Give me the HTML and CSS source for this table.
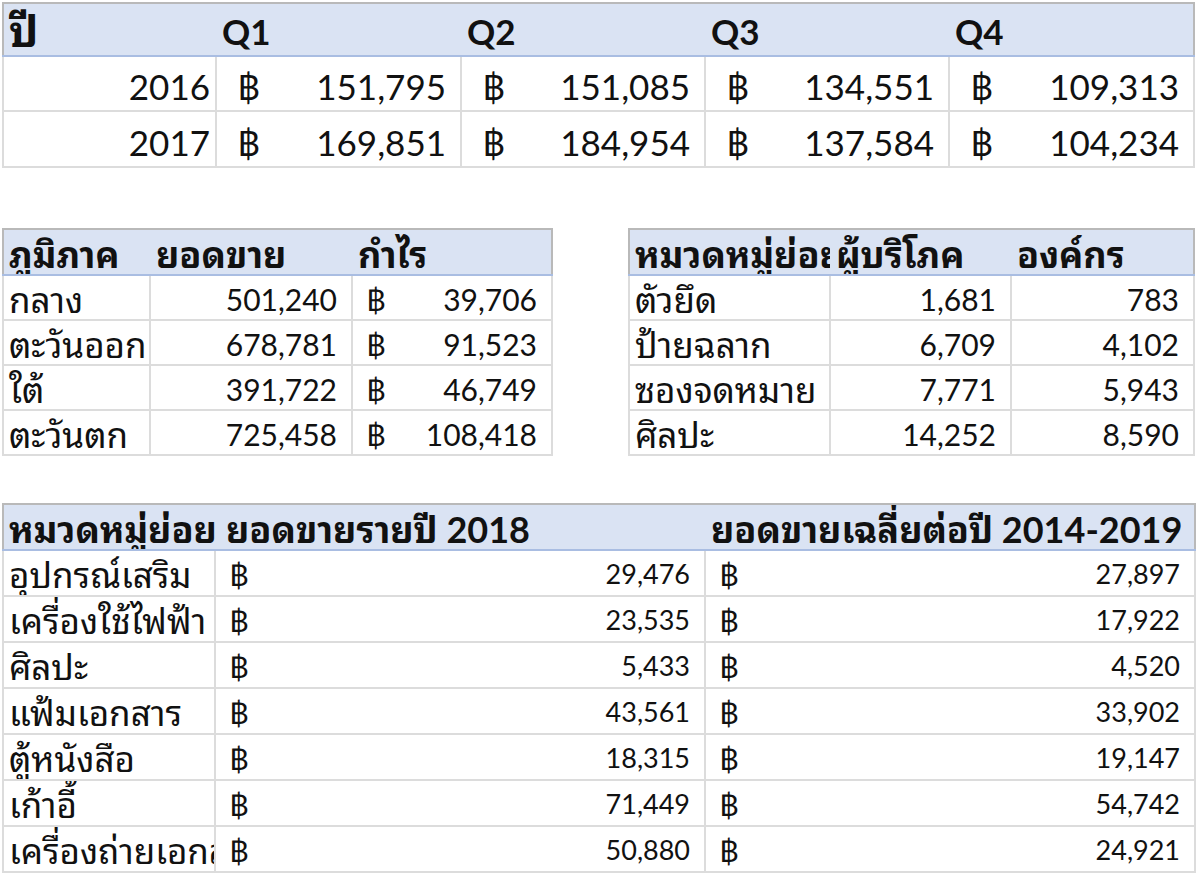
FILE: index.html
```html
<!DOCTYPE html>
<html lang="th">
<head>
<meta charset="utf-8">
<link rel="stylesheet" href="styles.css">
</head>
<body>
<div class="page">
  <table class="sheet t1">
    <colgroup><col style="width:213px"><col style="width:245px"><col style="width:244px"><col style="width:244px"><col style="width:245px"></colgroup>
    <thead><tr><th class="tx">ปี</th><th>Q1</th><th>Q2</th><th>Q3</th><th>Q4</th></tr></thead>
    <tbody>
      <tr><td class="num gen">2016</td><td class="acc"><span class="b">฿</span>151,795</td><td class="acc"><span class="b">฿</span>151,085</td><td class="acc"><span class="b">฿</span>134,551</td><td class="acc"><span class="b">฿</span>109,313</td></tr>
      <tr><td class="num gen">2017</td><td class="acc"><span class="b">฿</span>169,851</td><td class="acc"><span class="b">฿</span>184,954</td><td class="acc"><span class="b">฿</span>137,584</td><td class="acc"><span class="b">฿</span>104,234</td></tr>
    </tbody>
  </table>

  <div class="pair">
    <table class="sheet t2">
      <colgroup><col style="width:147px"><col style="width:202px"><col style="width:200px"></colgroup>
      <thead><tr><th class="tx">ภูมิภาค</th><th class="tx">ยอดขาย</th><th class="tx">กำไร</th></tr></thead>
      <tbody>
        <tr><td class="tx">กลาง</td><td class="num">501,240</td><td class="acc"><span class="b">฿</span>39,706</td></tr>
        <tr><td class="tx">ตะวันออก</td><td class="num">678,781</td><td class="acc"><span class="b">฿</span>91,523</td></tr>
        <tr><td class="tx">ใต้</td><td class="num">391,722</td><td class="acc"><span class="b">฿</span>46,749</td></tr>
        <tr><td class="tx">ตะวันตก</td><td class="num">725,458</td><td class="acc"><span class="b">฿</span>108,418</td></tr>
      </tbody>
    </table>
    <table class="sheet t3">
      <colgroup><col style="width:201px"><col style="width:181px"><col style="width:183px"></colgroup>
      <thead><tr><th class="tx">หมวดหมู่ย่อย</th><th class="tx">ผู้บริโภค</th><th class="tx">องค์กร</th></tr></thead>
      <tbody>
        <tr><td class="tx">ตัวยึด</td><td class="num">1,681</td><td class="num">783</td></tr>
        <tr><td class="tx">ป้ายฉลาก</td><td class="num">6,709</td><td class="num">4,102</td></tr>
        <tr><td class="tx">ซองจดหมาย</td><td class="num">7,771</td><td class="num">5,943</td></tr>
        <tr><td class="tx">ศิลปะ</td><td class="num">14,252</td><td class="num">8,590</td></tr>
      </tbody>
    </table>
  </div>

  <table class="sheet t4">
    <colgroup><col style="width:212px"><col style="width:490px"><col style="width:490px"></colgroup>
    <thead><tr><th class="tx">หมวดหมู่ย่อย</th><th class="tx">ยอดขายรายปี 2018</th><th class="tx">ยอดขายเฉลี่ยต่อปี 2014-2019</th></tr></thead>
    <tbody>
      <tr><td class="tx">อุปกรณ์เสริม</td><td class="acc"><span class="b">฿</span>29,476</td><td class="acc"><span class="b">฿</span>27,897</td></tr>
      <tr><td class="tx">เครื่องใช้ไฟฟ้า</td><td class="acc"><span class="b">฿</span>23,535</td><td class="acc"><span class="b">฿</span>17,922</td></tr>
      <tr><td class="tx">ศิลปะ</td><td class="acc"><span class="b">฿</span>5,433</td><td class="acc"><span class="b">฿</span>4,520</td></tr>
      <tr><td class="tx">แฟ้มเอกสาร</td><td class="acc"><span class="b">฿</span>43,561</td><td class="acc"><span class="b">฿</span>33,902</td></tr>
      <tr><td class="tx">ตู้หนังสือ</td><td class="acc"><span class="b">฿</span>18,315</td><td class="acc"><span class="b">฿</span>19,147</td></tr>
      <tr><td class="tx">เก้าอี้</td><td class="acc"><span class="b">฿</span>71,449</td><td class="acc"><span class="b">฿</span>54,742</td></tr>
      <tr><td class="tx">เครื่องถ่ายเอกสาร</td><td class="acc"><span class="b">฿</span>50,880</td><td class="acc"><span class="b">฿</span>24,921</td></tr>
    </tbody>
  </table>
</div>
</body>
</html>
```

FILE: styles.css
```css
html, body {
  margin: 0;
  padding: 0;
  background: #ffffff;
}
body {
  width: 1197px;
  height: 880px;
  overflow: hidden;
  font-family: "Lato", "Noto Sans Thai Looped", "Noto Sans Thai", "Noto Sans", sans-serif;
  color: #111;
}
.page {
  padding: 2px 0 0 2px;
  display: flex;
  flex-direction: column;
}
.sheet {
  border-collapse: collapse;
  table-layout: fixed;
  border: 2px solid #b9b9b9;
  background: #fff;
}
.sheet th {
  background: #dae3f3;
  text-align: left;
  font-weight: 700;
  border-bottom: 2px solid #a9bde2;
  padding: 0 4px 0 6px;
  white-space: nowrap;
  overflow: hidden;
  vertical-align: bottom;
}
.sheet th:first-child { padding-left: 5px; }
.sheet td {
  border: 2px solid #dcdcdc;
  padding: 0 5px;
  white-space: nowrap;
  overflow: hidden;
  vertical-align: bottom;
}
.sheet td.num {
  text-align: right;
  padding-right: 14px;
}
.sheet td.num.gen {
  padding-right: 5px;
}
.sheet td.acc {
  text-align: right;
  padding-left: 13px;
  padding-right: 14px;
}
.b {
  float: left;
}
.tx {
  font-stretch: 85%;
}

/* top table */
.t1 { width: 1193px; font-size: 35px; line-height: 44px; }
.t1 th { height: 49px; padding-bottom: 2px; }
.t1 th.tx { font-size: 44px; line-height: 46px; }
.t1 td { height: 51px; padding-bottom: 2px; }
.t1 tbody tr:last-child td { height: 52px; }
.t1 td.acc { padding-left: 20px; }

/* middle pair */
.pair {
  display: flex;
  gap: 75px;
  margin-top: 60px;
}
.t2, .t3 { font-size: 30px; line-height: 38px; }
.t2 { width: 551px; }
.t3 { width: 567px; }
.t2 th, .t3 th { height: 44px; font-size: 36px; line-height: 40px; }
.t2 td, .t3 td { height: 42px; padding-bottom: 1px; }
.t2 td.tx, .t3 td.tx { font-size: 35px; }

/* bottom table */
.t4 {
  width: 1193px;
  margin-top: 47px;
  font-size: 27px;
  line-height: 40px;
}
.t4 th { height: 44px; font-size: 36px; line-height: 40px; }
.t4 th:nth-child(2) { padding-left: 11px; }
.t4 td { height: 43px; padding-bottom: 1px; }
.t4 td.tx { font-size: 35px; }
.t4 .b { font-size: 30px; }
```
